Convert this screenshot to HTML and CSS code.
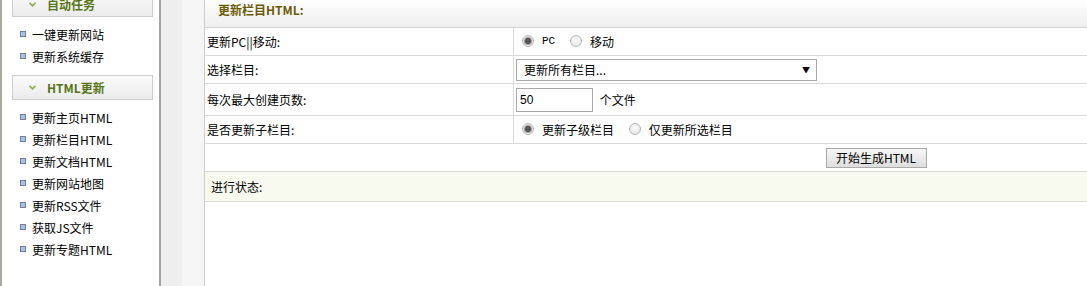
FILE: index.html
```html
<!DOCTYPE html>
<html lang="zh-CN">
<head>
    <meta charset="UTF-8">
    <title>更新栏目HTML</title>
    <link rel="stylesheet" href="styles.css">
</head>
<body>
<div class="frame">
    <!-- 左侧菜单 -->
    <div class="sidebar">
        <div class="group-title first">
            <svg class="arrow" width="7" height="5" viewBox="0 0 7 5"><polyline points="0.5,0.8 3.5,3.8 6.5,0.8" fill="none" stroke="#8db04a" stroke-width="1.6"/></svg>
            <span>自动任务</span>
        </div>
        <ul class="menu">
            <li>一键更新网站</li>
            <li>更新系统缓存</li>
        </ul>
        <div class="group-title">
            <svg class="arrow" width="7" height="5" viewBox="0 0 7 5"><polyline points="0.5,0.8 3.5,3.8 6.5,0.8" fill="none" stroke="#8db04a" stroke-width="1.6"/></svg>
            <span>HTML更新</span>
        </div>
        <ul class="menu">
            <li>更新主页HTML</li>
            <li>更新栏目HTML</li>
            <li>更新文档HTML</li>
            <li>更新网站地图</li>
            <li>更新RSS文件</li>
            <li>获取JS文件</li>
            <li>更新专题HTML</li>
        </ul>
    </div>
    <div class="gutter"></div>

    <!-- 主区域 -->
    <div class="main">
        <div class="main-title">更新栏目HTML:</div>
        <table class="form-table">
            <tr class="row-std">
                <td class="label">更新PC||移动:</td>
                <td class="field">
                    <label class="opt"><input type="radio" name="mode" checked><span class="latin">PC</span></label>
                    <label class="opt"><input type="radio" name="mode"><span>移动</span></label>
                </td>
            </tr>
            <tr class="row-std">
                <td class="label">选择栏目:</td>
                <td class="field">
                    <span class="select-wrap">
                        <select class="select">
                            <option>更新所有栏目...</option>
                        </select>
                    </span>
                </td>
            </tr>
            <tr class="row-tall">
                <td class="label">每次最大创建页数:</td>
                <td class="field">
                    <input class="num" type="text" value="50">
                    <span class="unit">个文件</span>
                </td>
            </tr>
            <tr class="row-std">
                <td class="label">是否更新子栏目:</td>
                <td class="field">
                    <label class="opt"><input type="radio" name="sub" checked><span>更新子级栏目</span></label>
                    <label class="opt"><input type="radio" name="sub"><span>仅更新所选栏目</span></label>
                </td>
            </tr>
            <tr class="row-std">
                <td class="btn-cell" colspan="2"><button class="btn">开始生成HTML</button></td>
            </tr>
            <tr class="row-status">
                <td class="status" colspan="2">进行状态:</td>
            </tr>
        </table>
    </div>
</div>
</body>
</html>
```

FILE: styles.css
```css
body, html{
    margin: 0;
    padding: 0;
    width: 100%;
    height: 100%;
    overflow: hidden;
    background: #fff;
    font-family: "Noto Sans CJK SC", "Liberation Sans", sans-serif;
    font-size: 12px;
    color: #000;
}
.frame{
    display: flex;
    height: 100%;
}

/* 左侧 */
.sidebar{
    width: 157px;
    flex: none;
    border-left: 2px solid #a8ab9f;
    border-right: 2px solid #a3a3a3;
    background: #fff;
}
.group-title{
    display: flex;
    align-items: center;
    width: 141px;
    height: 25px;
    box-sizing: border-box;
    margin: 8px 0 0 10px;
    border: 1px solid #cdcdcd;
    background: linear-gradient(#fbfbfb, #ebebeb);
    color: #567517;
    font-weight: bold;
}
.group-title.first{
    margin-top: -8px;
}
.arrow{
    margin: 0 11px 0 16px;
}
.menu{
    list-style: none;
    margin: 0;
    padding: 6px 0 0 0;
}
.menu li{
    display: flex;
    align-items: center;
    height: 22px;
    padding-left: 18px;
}
.menu li:before{
    content: "";
    width: 4px;
    height: 4px;
    margin-right: 6px;
    border: 1px solid #6f7f9c;
    background: #a9c1e4;
}

.gutter{
    width: 43px;
    flex: none;
    background: linear-gradient(to right, #eeeeee 21px, #f5f5f5 21px);
    border-right: 1px solid #cccccc;
}

/* 主区域 */
.main{
    flex: 1;
    overflow: hidden;
}
.main-title{
    height: 27px;
    line-height: 20px;
    padding-left: 13px;
    border-bottom: 1px solid #d6d6d6;
    background: linear-gradient(#ffffff, #eeeeee);
    color: #6b5b08;
    font-weight: bold;
}
.form-table{
    width: 1342px;
    border-collapse: collapse;
}
.form-table td{
    padding: 0;
    border-bottom: 1px solid #dadada;
}
.row-std td{
    height: 27px;
}
.row-tall td{
    height: 31px;
}
.row-status td{
    height: 29px;
}
.label{
    width: 306px;
    padding-left: 2px !important;
    border-right: 1px solid #dadada;
}
.field{
    padding-left: 2px !important;
}
.opt{
    display: inline-flex;
    align-items: center;
    margin-right: 0;
}
.opt input{
    appearance: none;
    -webkit-appearance: none;
    width: 12px;
    height: 12px;
    margin: 0 8px 0 6px;
    border: 1px solid #b9b9b9;
    border-radius: 50%;
    background: radial-gradient(circle at 50% 40%, #ffffff, #dcdcdc);
}
.opt input:checked{
    background: radial-gradient(circle, #555 2.5px, #9a9a9a 3.5px, #e6e6e6 4.5px, #f4f4f4);
}
.opt + .opt input{
    margin-left: 12px;
}
.latin{
    font-family: "Liberation Mono", monospace;
    font-size: 11px;
}
.select-wrap{
    position: relative;
    display: inline-block;
}
.select{
    appearance: none;
    -webkit-appearance: none;
    width: 301px;
    height: 22px;
    margin: 0;
    padding: 0 0 0 7px;
    border: 1px solid #a9a9a9;
    background: #fff;
    font-family: "Noto Sans CJK SC", sans-serif;
    font-size: 12px;
    color: #000;
}
.select-wrap:after{
    content: "▼";
    position: absolute;
    right: 7px;
    top: 5px;
    font-size: 8px;
    pointer-events: none;
}
.num{
    width: 77px;
    height: 24px;
    box-sizing: border-box;
    margin: 0;
    padding: 0 3px;
    border: 1px solid #a9a9a9;
    font-family: "Liberation Sans", sans-serif;
    font-size: 12px;
    vertical-align: middle;
}
.unit{
    margin-left: 4px;
    vertical-align: middle;
}
.btn-cell{
    text-align: center;
}
.btn{
    width: 101px;
    height: 20px;
    padding: 0;
    border: 1px solid #a9a9a9;
    border-radius: 0;
    background: linear-gradient(#f6f6f6, #dedede);
    font-family: "Noto Sans CJK SC", sans-serif;
    font-size: 12px;
    color: #000;
}
.status{
    padding-left: 6px !important;
    background: #f8f9ef;
}
```
